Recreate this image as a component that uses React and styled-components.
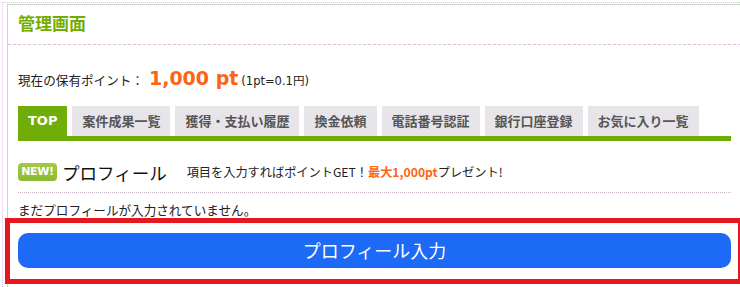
import React from "react";
import styled, { createGlobalStyle } from "styled-components";

const GlobalStyle = createGlobalStyle`
  html, body { margin: 0; padding: 0; background: #fff; }
  body {
    font-family: "Noto Sans CJK JP", "Noto Sans", sans-serif;
    color: #222;
    overflow: hidden;
  }
  * { box-sizing: content-box; }
`;

const Frame = styled.div`
  margin: 2px 0 0 2px;
  width: 735px;
  border-top: 1px dotted #c4d2c4;
  border-left: 1px dotted #d8c4d8;
  border-right: 1px dotted #c4d2c4;
  padding: 1px 1px 0 4px;
`;

const Panel = styled.div`
  border: 1px solid #c9d6c9;
  border-bottom: none;
  border-top-right-radius: 3px;
  height: 290px;
`;

const Header = styled.div`
  height: 31px;
  padding: 5px 10px 3px;
  border-bottom: 1px dashed #dcc0dc;
`;

const Title = styled.h1`
  margin: 0;
  font-size: 17px;
  line-height: 26px;
  font-weight: bold;
  color: #72ad00;
`;

const Body = styled.div`
  padding: 0 10px;
`;

const PointLine = styled.div`
  margin-top: 21px;
  height: 24px;
  display: flex;
  align-items: baseline;
  font-size: 12.6px;
  line-height: 24px;
`;

const PointValue = styled.span`
  font-family: "DejaVu Sans", sans-serif;
  font-weight: bold;
  font-size: 19px;
  color: #ff6414;
  margin: 0 3px 0 5px;
`;

const PointRate = styled.span`
  font-family: "DejaVu Sans", "Noto Sans CJK JP", sans-serif;
  font-size: 11.5px;
`;

const TabList = styled.div`
  margin-top: 16px;
  display: flex;
  gap: 5px;
  border-bottom: 5px solid #70ad08;
`;

const Tab = styled.div`
  height: 30px;
  line-height: 30px;
  padding: 0 10px;
  font-size: 13px;
  font-weight: bold;
  color: ${(p) => (p.$active ? "#fff" : "#555")};
  background: ${(p) => (p.$active ? "#70ad08" : "#e7e5ea")};
  font-family: ${(p) =>
    p.$active
      ? '"DejaVu Sans", sans-serif'
      : '"Noto Sans CJK JP", sans-serif'};
`;

const ProfileRow = styled.div`
  margin-top: 17px;
  height: 28px;
  padding-bottom: 6px;
  display: flex;
  align-items: center;
  border-bottom: 1px dotted #c8b6c8;
`;

const NewBadge = styled.span`
  width: 39px;
  height: 18px;
  border-radius: 4px;
  background: linear-gradient(#a2c94a, #8cba32);
  color: #fff;
  font-family: "DejaVu Sans", sans-serif;
  font-weight: bold;
  font-size: 11px;
  line-height: 18px;
  text-align: center;
  letter-spacing: -0.3px;
`;

const ProfileTitle = styled.span`
  margin-left: 5px;
  font-size: 17.5px;
  color: #111;
`;

const ProfileNote = styled.span`
  margin-left: 20px;
  font-size: 12.2px;
  color: #222;
`;

const Highlight = styled.b`
  color: #ff6414;
`;

const Notice = styled.div`
  margin-top: 8px;
  font-size: 12.6px;
  line-height: 18px;
`;

const ButtonArea = styled.div`
  margin: 4px -7px 0 -8px;
  padding: 10px 7px 11px 8px;
  outline: 5px solid #e8161e;
  background: #fff;
`;

const InputButton = styled.div`
  height: 35px;
  border-radius: 10px;
  background: #1c6af6;
  color: #fff;
  font-size: 18px;
  line-height: 35px;
  text-align: center;
  cursor: pointer;
`;

const tabs = [
  "TOP",
  "案件成果一覧",
  "獲得・支払い履歴",
  "換金依頼",
  "電話番号認証",
  "銀行口座登録",
  "お気に入り一覧",
];

export default function App() {
  return (
    <>
      <GlobalStyle />
      <Frame>
        <Panel>
          <Header>
            <Title>管理画面</Title>
          </Header>
          <Body>
            <PointLine>
              現在の保有ポイント：<PointValue>1,000 pt</PointValue>
              <PointRate>(1pt=0.1円)</PointRate>
            </PointLine>
            <TabList>
              {tabs.map((t, i) => (
                <Tab key={t} $active={i === 0}>
                  {t}
                </Tab>
              ))}
            </TabList>
            <ProfileRow>
              <NewBadge>NEW!</NewBadge>
              <ProfileTitle>プロフィール</ProfileTitle>
              <ProfileNote>
                項目を入力すればポイントGET！<Highlight>最大1,000pt</Highlight>プレゼント!
              </ProfileNote>
            </ProfileRow>
            <Notice>まだプロフィールが入力されていません。</Notice>
            <ButtonArea>
              <InputButton role="button">プロフィール入力</InputButton>
            </ButtonArea>
          </Body>
        </Panel>
      </Frame>
    </>
  );
}
